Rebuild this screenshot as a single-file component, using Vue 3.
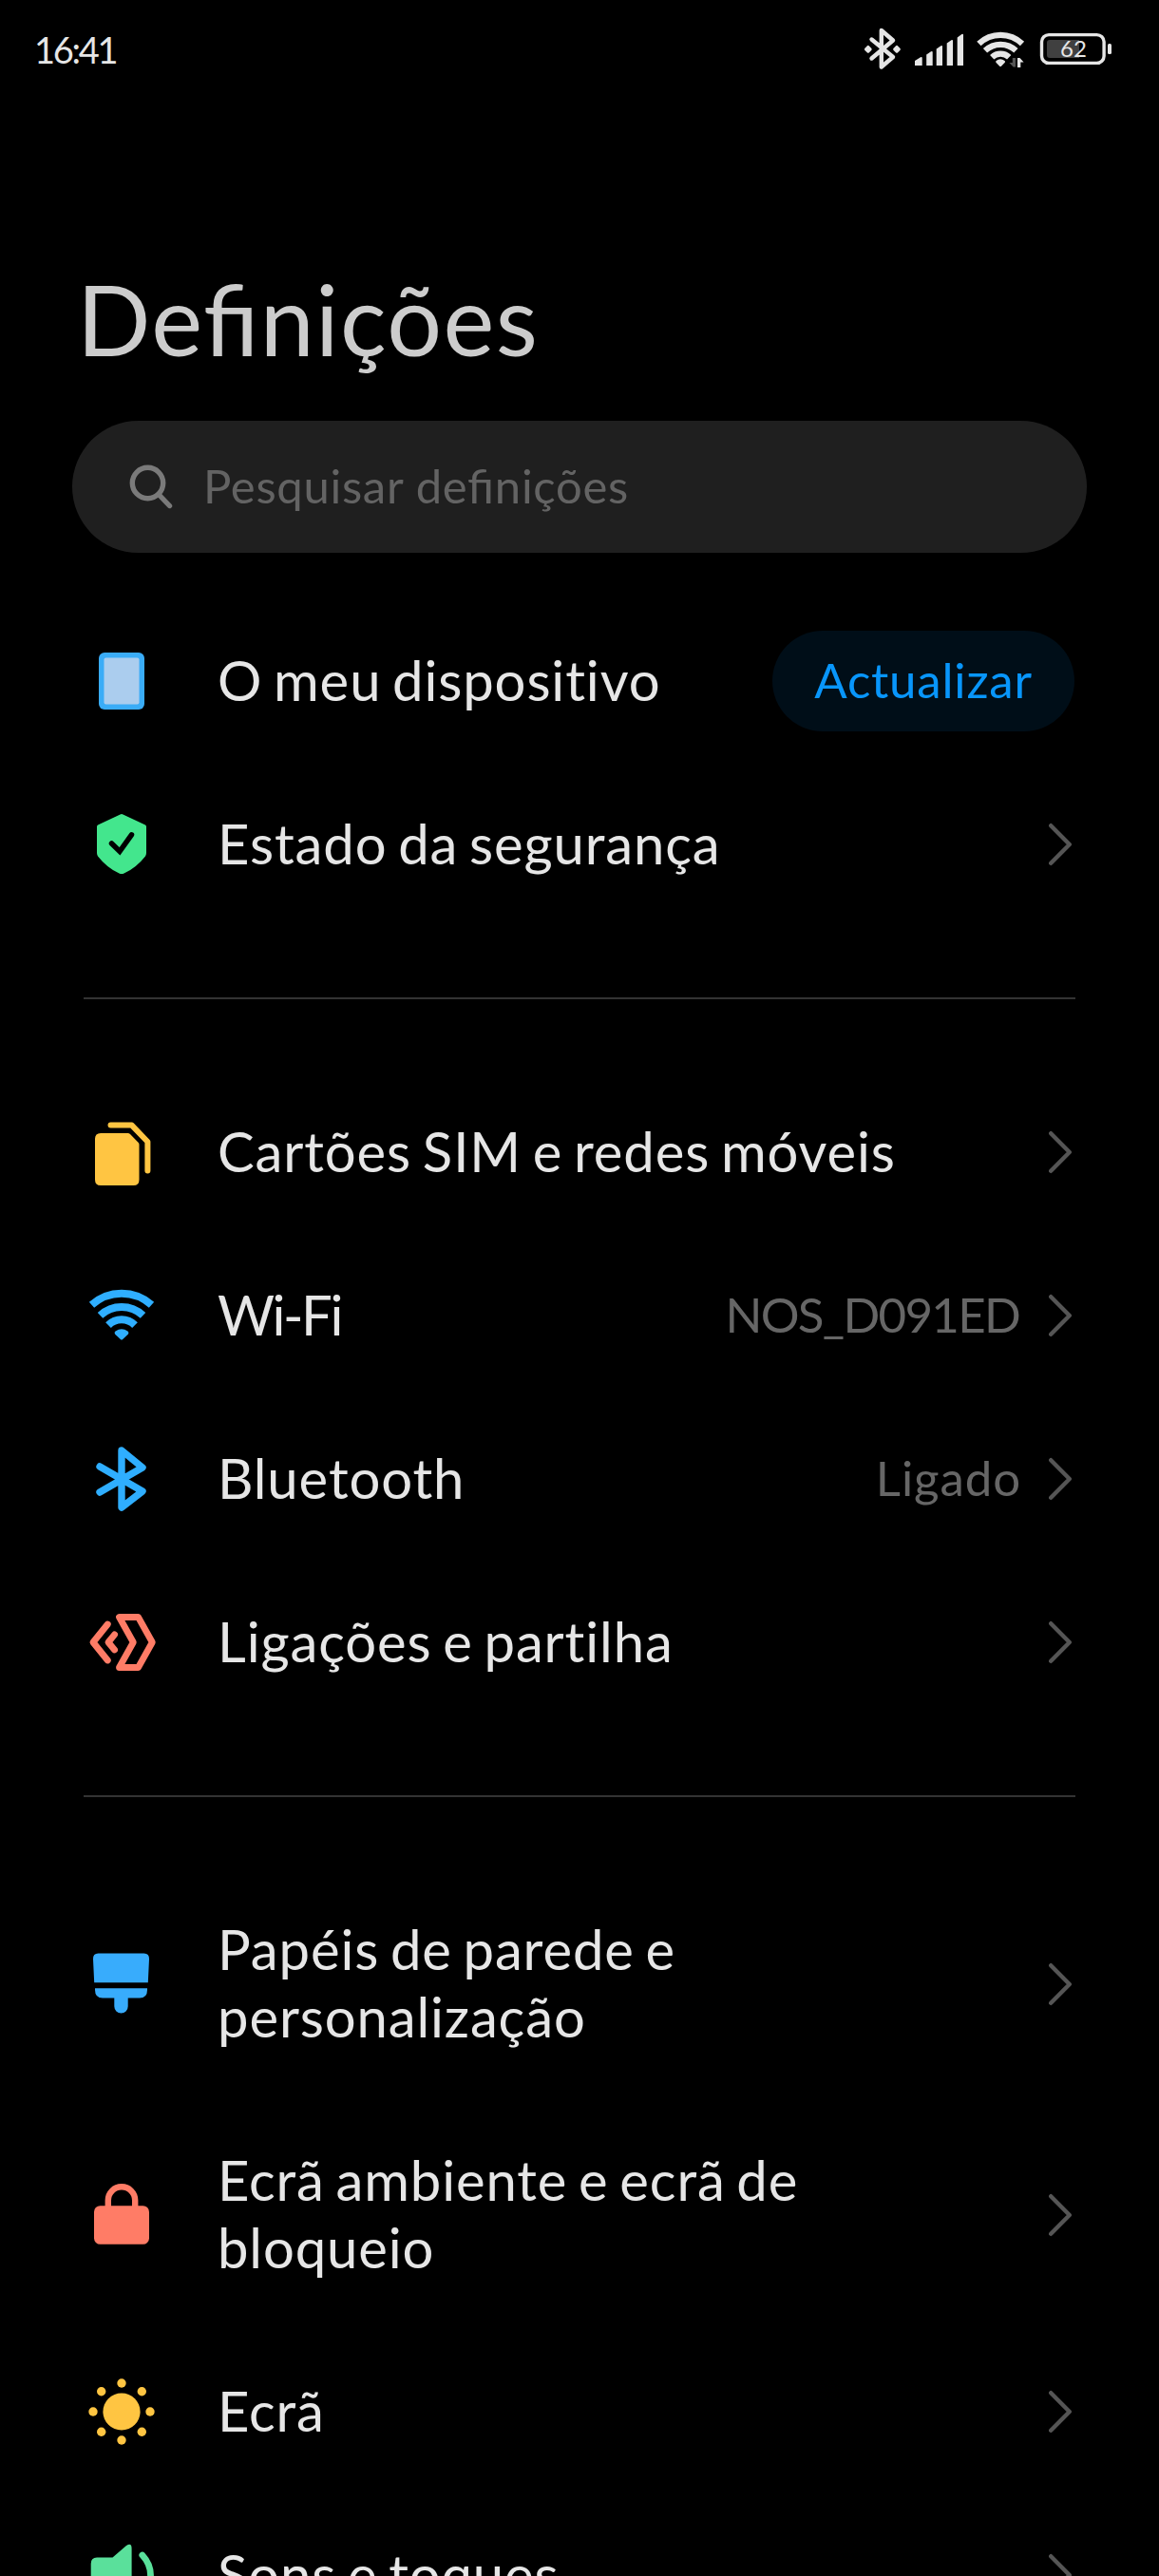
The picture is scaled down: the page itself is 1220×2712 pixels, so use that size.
<script setup>
	import { ref } from 'vue';

	const blue = '#2faeff';
	const coral = '#ff7c66';
	const yellow = '#ffc542';

	const icons = {
		device: `<rect x="16" y="10" width="48" height="60" rx="6" fill="#3aacf7"/><rect x="21.5" y="15.5" width="37" height="49" rx="2" fill="#abcdee"/>`,
		shield: `<path d="M38.5 8.6Q40 7.6 41.5 8.6L65 19.4Q66 20 66 21.5V49Q66 51 65 52.4Q55 65 42.5 70.4Q40 71.6 37.5 70.4Q25 65 15 52.4Q14 51 14 49V21.5Q14 20 15 19.4Z" fill="#43e68d"/><path d="M29.5 39L38 47.3L50.5 29.8" fill="none" stroke="#000" stroke-width="5.5" stroke-linecap="round"/>`,
		sim: `<path d="M18 20H46.5Q48 20 49 21L57.5 29.7Q58.5 30.7 58.5 32V69Q58.5 75 52.5 75H18Q12 75 12 69V26Q12 20 18 20Z" fill="${yellow}"/><path d="M28.5 11.6H50.7L67.4 29V59.5" fill="none" stroke="${yellow}" stroke-width="6" stroke-linecap="round" stroke-linejoin="round"/>`,
		wifi: `<g fill="none" stroke="${blue}" stroke-width="8"><path d="M8.5 28.7A47.3 47.3 0 0 1 71.5 28.7"/><path d="M17.5 39.9A33 33 0 0 1 62.5 39.9"/><path d="M26 50.1A19.7 19.7 0 0 1 54 50.1"/></g><path d="M33.5 56.5Q40 51.8 46.5 56.5Q48.3 58 46.8 59.7L41.2 65Q40 66 38.8 65L33.2 59.7Q31.7 58 33.5 56.5Z" fill="${blue}"/>`,
		bluetooth: `<path d="M17 27L62 53L40 70V10L62 28L17 54" fill="none" stroke="${blue}" stroke-width="7.4" stroke-linecap="round" stroke-linejoin="round"/>`,
		share: `<g fill="none" stroke="${coral}" stroke-width="6.8" stroke-linecap="round" stroke-linejoin="round"><path d="M37.5 13.5H57.5L72.3 40L57.5 66.5H37.5L52.3 40Z"/><path d="M25.3 21L10 40L25.3 59"/><path d="M32.6 31.9L26 40L32.6 48"/></g>`,
		brush: `<path d="M15.5 7.5H63.5Q69.3 7.5 69 13.5L67.8 38.2H11.2L10 13.5Q9.7 7.5 15.5 7.5Z" fill="#38acfc"/><path d="M12 44.2H67V46Q67 54.5 59 54.5H46.7V63.3A7.2 7.2 0 0 1 32.3 63.3V54.5H20Q12 54.5 12 46Z" fill="#38acfc"/>`,
		lock: `<rect x="11" y="30.2" width="58" height="40.6" rx="6.5" fill="${coral}"/><path d="M25.8 33V24.5A14.2 14.2 0 0 1 54.2 24.5V33" fill="none" stroke="${coral}" stroke-width="6.4"/>`,
		sun: `<g fill="${yellow}"><circle cx="40" cy="40" r="19.6"/><circle cx="40" cy="10" r="4.7"/><circle cx="40" cy="70" r="4.7"/><circle cx="10" cy="40" r="4.7"/><circle cx="70" cy="40" r="4.7"/><circle cx="18.7" cy="18.7" r="4.7"/><circle cx="61.3" cy="18.7" r="4.7"/><circle cx="18.7" cy="61.3" r="4.7"/><circle cx="61.3" cy="61.3" r="4.7"/></g>`,
		sound: `<path d="M14 21.5H30.5L45 9Q50.6 5.5 50.6 12V68Q50.6 74.5 45 71L30.5 58.5H14Q7.7 58.5 7.7 52V28Q7.7 21.5 14 21.5Z" fill="#5ae09b"/><path d="M61.8 19Q70.5 28.5 70.5 40T61.8 61" fill="none" stroke="#5ae09b" stroke-width="6.8" stroke-linecap="round"/>`,
	};

	const groups = ref([
		[
			{ icon: 'device', label: 'O meu dispositivo', action: 'Actualizar' },
			{ icon: 'shield', label: 'Estado da segurança' },
		],
		[
			{ icon: 'sim', label: 'Cartões SIM e redes móveis' },
			{ icon: 'wifi', label: 'Wi-Fi', value: 'NOS_D091ED', tight: true },
			{ icon: 'bluetooth', label: 'Bluetooth', value: 'Ligado' },
			{ icon: 'share', label: 'Ligações e partilha' },
		],
		[
			{ icon: 'brush', label: 'Papéis de parede e personalização' },
			{ icon: 'lock', label: 'Ecrã ambiente e ecrã de bloqueio' },
			{ icon: 'sun', label: 'Ecrã' },
			{ icon: 'sound', label: 'Sons e toques' },
		],
	]);
</script>

<template>
	<main class="screen">
		<header class="status">
			<span class="time">16:41</span>
			<svg class="status-icons" width="270" height="60" viewBox="905 20 270 60">
				<path
					d="M917.5 41.5L940 60L927.8 70.5V32L940 42.5L917.5 61.5"
					fill="none"
					stroke="#e6e6e6"
					stroke-width="4.4"
					stroke-linecap="round"
					stroke-linejoin="round"
				/>
				<g fill="#e6e6e6">
					<rect x="910.6" y="48.6" width="6.4" height="6.4" rx="1.6" transform="rotate(45 913.8 51.8)" />
					<rect x="940.8" y="48.6" width="6.4" height="6.4" rx="1.6" transform="rotate(45 944 51.8)" />
					<path d="M963 64L969 60.2Q970.7 59.6 970.7 61V69H963Z" />
					<path d="M975.2 57.5L980 54.3Q981.7 53.6 981.7 55V69H975.2Z" />
					<path d="M985.7 51.5L990.4 48.3Q992 47.6 992 49V69H985.7Z" />
					<path d="M996.7 45.5L1001.4 42.2Q1003 41.4 1003 43V69H996.7Z" />
					<path d="M1007.7 39.5L1012.4 36Q1014 35.2 1014 37V69H1007.7Z" />
					<path d="M1048.6 64Q1053 60.4 1057.6 64Q1058.6 65 1057.6 66L1054.2 69.6Q1053 70.6 1052 69.6L1048.6 66Q1047.6 65 1048.6 64Z" />
					<path d="M1071 71V61L1073.5 61L1077.6 65.4H1074.3V71Z" />
				</g>
				<g fill="none" stroke="#e6e6e6" stroke-width="6.2">
					<path d="M1030.4 46A33 33 0 0 1 1076 46" />
					<path d="M1037 53.3A23.5 23.5 0 0 1 1069.4 53.3" />
					<path d="M1044.2 60.2A13 13 0 0 1 1062.2 60.2" />
				</g>
				<path d="M1069 61V70.5H1066.6L1062.4 66H1065.8V61Z" fill="#555" />
				<rect x="1096.5" y="36.6" width="65.6" height="29.8" rx="7.5" fill="none" stroke="#e6e6e6" stroke-width="3.4" />
				<path d="M1105 42H1136V61H1105Q1102 61 1102 58V45Q1102 42 1105 42Z" fill="#404040" />
				<rect x="1166" y="46" width="4" height="11" rx="1.5" fill="#e6e6e6" />
				<text x="1130" y="60" class="battery" text-anchor="middle">62</text>
			</svg>
		</header>

		<h1 class="title">Definições</h1>

		<div class="search">
			<svg width="52" height="52" viewBox="0 0 52 52">
				<circle cx="22.5" cy="21.5" r="16.2" />
				<path d="M34.5 34L45.5 45.5" />
			</svg>
			<span>Pesquisar definições</span>
		</div>

		<section v-for="(group, i) in groups" :key="i" class="group">
			<div v-for="item in group" :key="item.icon" class="row" :class="{ tight: item.tight }">
				<svg class="icon" viewBox="0 0 80 80" v-html="icons[item.icon]"></svg>
				<span class="label">{{ item.label }}</span>
				<button v-if="item.action" class="action">{{ item.action }}</button>
				<template v-else>
					<span v-if="item.value" class="value">{{ item.value }}</span>
					<svg class="chevron" viewBox="0 0 28 48">
						<path d="M2.2 4.2L21.8 24L2.2 43.8" />
					</svg>
				</template>
			</div>
		</section>
	</main>
</template>

<style>
	body {
		margin: 0;
		background: #000;
	}
</style>

<style scoped>
	.screen {
		box-sizing: border-box;
		width: 1220px;
		height: 2712px;
		overflow: hidden;
		background: #000;
		color: #e6e6e6;
		font-family: Lato, 'Open Sans', sans-serif;
	}
	.status {
		display: flex;
		justify-content: space-between;
		align-items: flex-start;
		height: 60px;
		padding: 20px 45px 0 36px;
	}
	.time {
		font-size: 38px;
		line-height: 64px;
		letter-spacing: -2.3px;
	}
	.battery {
		font-size: 24px;
		fill: #e6e6e6;
	}
	.title {
		margin: 194px 0 0;
		padding-left: 81px;
		font-size: 102px;
		line-height: 124px;
		font-weight: 400;
		letter-spacing: 1.4px;
		font-feature-settings: 'liga' 1;
		color: #ccc;
	}
	.search {
		display: flex;
		align-items: center;
		gap: 29px;
		box-sizing: border-box;
		height: 139px;
		margin: 45px 76px 49px;
		padding-left: 57px;
		border-radius: 70px;
		background: #1f1f1f;
		font-size: 49px;
		letter-spacing: 0.7px;
		font-feature-settings: 'liga' 1;
		color: #636363;
	}
	.search span {
		margin-bottom: 4px;
	}
	.search svg {
		fill: none;
		stroke: #7a7a7a;
		stroke-width: 5.4;
		stroke-linecap: round;
	}
	.group {
		margin: 0 88px;
	}
	.group + .group {
		margin-top: 75px;
		padding-top: 75px;
		border-top: 2px solid #333;
	}
	.row {
		display: flex;
		align-items: center;
		min-height: 71px;
		padding: 50.5px 0;
	}
	.icon {
		flex: none;
		width: 80px;
		height: 80px;
		margin: -10px 61px -10px 0;
	}
	.label {
		flex: 1;
		max-width: 720px;
		margin: -2px auto 2px 0;
		font-size: 58px;
		line-height: 71px;
		letter-spacing: 0.88px;
		word-spacing: -4px;
	}
	.action {
		flex: none;
		width: 318px;
		height: 106px;
		margin: -20px 1px -20px 0;
		padding: 0 0 3px;
		border: 0;
		border-radius: 53px;
		background: #000e18;
		font: inherit;
		font-size: 51px;
		letter-spacing: 0.8px;
		color: #0896fb;
	}
	.value {
		margin: -2px 29px 2px 0;
		font-size: 51px;
		letter-spacing: 0.9px;
		color: #666;
	}
	.tight .label {
		letter-spacing: -2.4px;
	}
	.tight .value {
		margin-right: 31px;
		letter-spacing: -1.7px;
	}
	.chevron {
		flex: none;
		width: 28px;
		height: 48px;
		fill: none;
		stroke: #555;
		stroke-width: 4.4;
		stroke-linecap: round;
		stroke-linejoin: round;
	}
</style>
